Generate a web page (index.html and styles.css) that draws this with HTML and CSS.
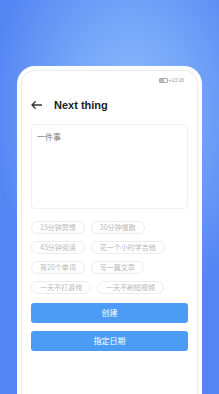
FILE: index.html
```html
<!DOCTYPE html>
<html lang="zh">
<head>
<meta charset="utf-8">
<title>Next thing</title>
<link rel="stylesheet" href="styles.css">
</head>
<body>
<div class="phone">
  <div class="screen">
    <div class="status">
      <span class="battery"><span class="battery-level"></span></span>
      <span class="status-text">+13:16</span>
    </div>
    <div class="header">
      <svg class="back" width="11" height="8" viewBox="0 0 11 8"><path d="M10.5 4H1.2M4.2 0.8L1 4l3.2 3.2" fill="none" stroke="#333" stroke-width="1.3" stroke-linecap="round" stroke-linejoin="round"/></svg>
      <span class="title">Next thing</span>
    </div>
    <div class="input">一件事</div>
    <div class="chips">
      <span class="chip">15分钟冥想</span>
      <span class="chip">30分钟慢跑</span>
      <span class="chip">45分钟阅读</span>
      <span class="chip">花一个小时学吉他</span>
      <span class="chip">背20个单词</span>
      <span class="chip">写一篇文章</span>
      <span class="chip">一天不打游戏</span>
      <span class="chip">一天不刷短视频</span>
    </div>
    <div class="btn">创建</div>
    <div class="btn">指定日期</div>
  </div>
</div>
</body>
</html>
```
FILE: styles.css
```css
html, body {
  margin: 0;
  padding: 0;
}
body {
  width: 219px;
  height: 394px;
  overflow: hidden;
  background: radial-gradient(ellipse 140px 200px at 130px 110px, #8fbcfc 0%, #75a6f8 45%, #5585f3 100%);
  font-family: "Noto Sans CJK SC", "Liberation Sans", sans-serif;
}
.phone {
  margin: 66px 0 0 17px;
  width: 177px;
  height: 340px;
  border: 4px solid #fff;
  border-bottom: 0;
  border-radius: 18px 18px 0 0;
  background: #fff;
}
.screen {
  height: 100%;
  box-sizing: border-box;
  border: 1px solid #ececec;
  border-bottom: 0;
  border-radius: 14px 14px 0 0;
  padding: 0 9px;
  background: #fff;
}
.status {
  height: 14px;
  display: flex;
  justify-content: flex-end;
  align-items: center;
  gap: 1px;
  padding: 2px 4px 0 0;
}
.battery {
  width: 7px;
  height: 3px;
  border: 1px solid #aaa;
  border-radius: 1px;
  display: flex;
}
.battery-level {
  width: 4px;
  background: #bbb;
}
.status-text {
  font-family: "Liberation Sans", sans-serif;
  font-size: 5px;
  color: #999;
  line-height: 6px;
}
.header {
  height: 24px;
  margin-top: 6px;
  display: flex;
  align-items: center;
  gap: 12px;
}
.back {
  display: block;
}
.title {
  font-family: "Liberation Sans", sans-serif;
  font-weight: bold;
  font-size: 11px;
  color: #222;
}
.input {
  margin-top: 7px;
  height: 85px;
  box-sizing: border-box;
  border: 1px solid #f0f0f0;
  border-radius: 4px;
  padding: 6px 5px;
  font-size: 8px;
  line-height: 12px;
  color: #777;
}
.chips {
  margin-top: 12px;
  display: flex;
  flex-wrap: wrap;
  gap: 7px 6px;
  width: 140px;
}
.chip {
  height: 13px;
  box-sizing: border-box;
  border: 1px solid #ececec;
  border-radius: 7px;
  padding: 0 8px;
  font-size: 7px;
  line-height: 11px;
  color: #b8b8b8;
  white-space: nowrap;
}
.btn {
  margin-top: 8px;
  height: 20px;
  border-radius: 3px;
  background: #4c9cf6;
  color: #fff;
  font-size: 8px;
  line-height: 20px;
  text-align: center;
}
.chips + .btn {
  margin-top: 9px;
}
```
